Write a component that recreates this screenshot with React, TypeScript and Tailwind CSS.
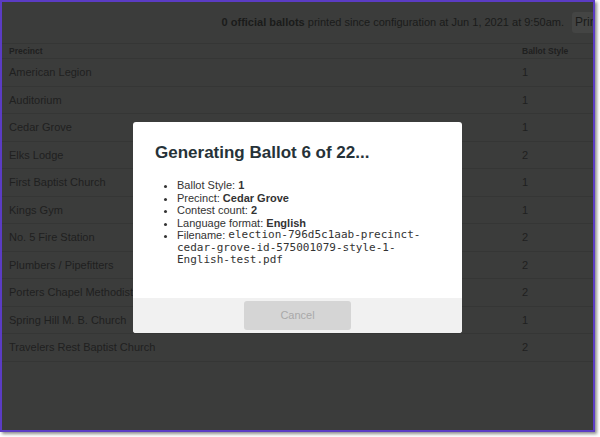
import React from "react";

const rows: [string, string][] = [
  ["American Legion", "1"],
  ["Auditorium", "1"],
  ["Cedar Grove", "1"],
  ["Elks Lodge", "2"],
  ["First Baptist Church", "1"],
  ["Kings Gym", "1"],
  ["No. 5 Fire Station", "2"],
  ["Plumbers / Pipefitters", "2"],
  ["Porters Chapel Methodist Church", "2"],
  ["Spring Hill M. B. Church", "1"],
  ["Travelers Rest Baptist Church", "2"],
];

export default function App() {
  return (
    <div className="w-[600px] h-[437px] bg-white overflow-hidden" style={{ fontFamily: '"Liberation Sans", Arial, sans-serif' }}>
      <div className="relative w-[595px] h-[432px] border-2 border-[#5b3cc4] bg-[#3b3c3b] overflow-hidden shadow-[2px_2px_3px_rgba(0,0,0,0.45)]">
        {/* header */}
        <div className="h-[41px] w-[656px] flex items-center justify-end gap-[8px] pb-[1px] whitespace-nowrap text-[11px] text-[#1a1b1a]">
          <span>
            <b>0 official ballots</b> printed since configuration at Jun 1, 2021 at 9:50am.
          </span>
          <span className="shrink-0 w-[86px] h-[21px] rounded-[3px] bg-[#444544] flex items-center pl-[3px] text-[12px]">Print Report</span>
        </div>
        {/* table */}
        <div className="text-[#1f201f]">
          <div className="grid grid-cols-[513px_1fr] px-[7px] h-[16px] items-center border-y border-[#353635] text-[8.5px] font-bold">
            <span>Precinct</span>
            <span>Ballot Style</span>
          </div>
          {rows.map(([name, style]) => (
            <div key={name} className="grid grid-cols-[513px_1fr] px-[7px] h-[27.5px] items-center border-b border-[#353635] text-[11px]">
              <span>{name}</span>
              <span>{style}</span>
            </div>
          ))}
        </div>

        {/* modal */}
        <div className="absolute left-[131px] top-[120px] w-[329px] h-[211px] bg-white rounded-[3px] overflow-hidden flex flex-col">
          <div className="pt-[21px] px-[22px]">
            <h1 className="text-[17px] leading-[20px] font-bold text-[#263238]">Generating Ballot 6 of 22...</h1>
            <ul className="list-disc pl-[22px] mt-[16px] text-[11px] leading-[12.5px] text-[#333]">
              <li>
                Ballot Style: <b>1</b>
              </li>
              <li>
                Precinct: <b>Cedar Grove</b>
              </li>
              <li>
                Contest count: <b>2</b>
              </li>
              <li>
                Language format: <b>English</b>
              </li>
              <li>
                Filename:{" "}
                <span className="align-top leading-[12.5px]" style={{ fontFamily: '"DejaVu Sans Mono", monospace' }}>
                  election-796d5c1aab-precinct-cedar-grove-id-575001079-style-1-English-test.pdf
                </span>
              </li>
            </ul>
          </div>
          <div className="mt-auto h-[35px] bg-[#f1f1f1] flex items-center justify-center">
            <div className="w-[107px] h-[29px] rounded-[3px] bg-[#d5d5d5] text-[#a9a9a9] text-[11px] flex items-center justify-center">Cancel</div>
          </div>
        </div>
      </div>
    </div>
  );
}
